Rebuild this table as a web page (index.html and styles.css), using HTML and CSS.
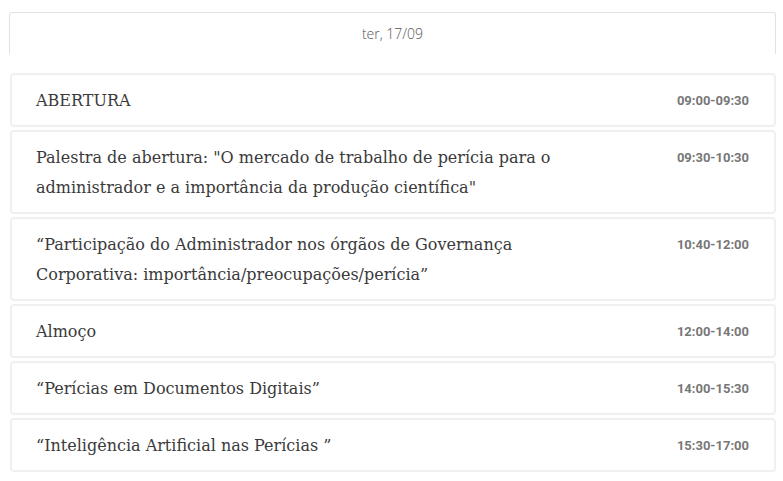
FILE: index.html
```html
<!DOCTYPE html>
<html lang="pt">
<head>
<meta charset="utf-8">
<link rel="stylesheet" href="styles.css">
</head>
<body>
<div class="page">
  <div class="tab">ter, 17/09</div>
  <div class="list">
    <div class="card"><div class="title">ABERTURA</div><div class="time">09:00-09:30</div></div>
    <div class="card"><div class="title">Palestra de abertura: "O mercado de trabalho de perícia para o administrador e a importância da produção científica"</div><div class="time">09:30-10:30</div></div>
    <div class="card"><div class="title">“Participação do Administrador nos órgãos de Governança Corporativa: importância/preocupações/perícia”</div><div class="time">10:40-12:00</div></div>
    <div class="card"><div class="title">Almoço</div><div class="time">12:00-14:00</div></div>
    <div class="card"><div class="title">“Perícias em Documentos Digitais”</div><div class="time">14:00-15:30</div></div>
    <div class="card"><div class="title">“Inteligência Artificial nas Perícias ”</div><div class="time">15:30-17:00</div></div>
  </div>
</div>
</body>
</html>
```
FILE: styles.css
```css
html, body { margin: 0; padding: 0; background: #fff; }
.page { padding: 12px 7px 0 9px; }
.tab {
  height: 40px;
  border: 1px solid #e2e2e2;
  border-bottom: none;
  border-radius: 3px 3px 0 0;
  display: flex;
  align-items: center;
  justify-content: center;
  font-family: "Open Sans", sans-serif;
  font-weight: 300;
  font-size: 14px;
  color: #555;
  padding-bottom: 1px;
}
.list {
  margin-top: 19px;
  display: flex;
  flex-direction: column;
  gap: 3px;
  padding-left: 1px;
}
.card {
  border: 2px solid #f0f0f0;
  border-radius: 4px;
  padding: 11px 25px 9px 24px;
  display: flex;
  justify-content: space-between;
  align-items: flex-start;
  gap: 40px;
}
.title {
  font-family: "DejaVu Serif", serif;
  font-size: 16px;
  line-height: 30px;
  color: #3a3a3a;
  max-width: 545px;
}
.time {
  font-family: Roboto, sans-serif;
  font-weight: 700;
  font-size: 13px;
  line-height: 30px;
  color: #777;
  white-space: nowrap;
}
```
